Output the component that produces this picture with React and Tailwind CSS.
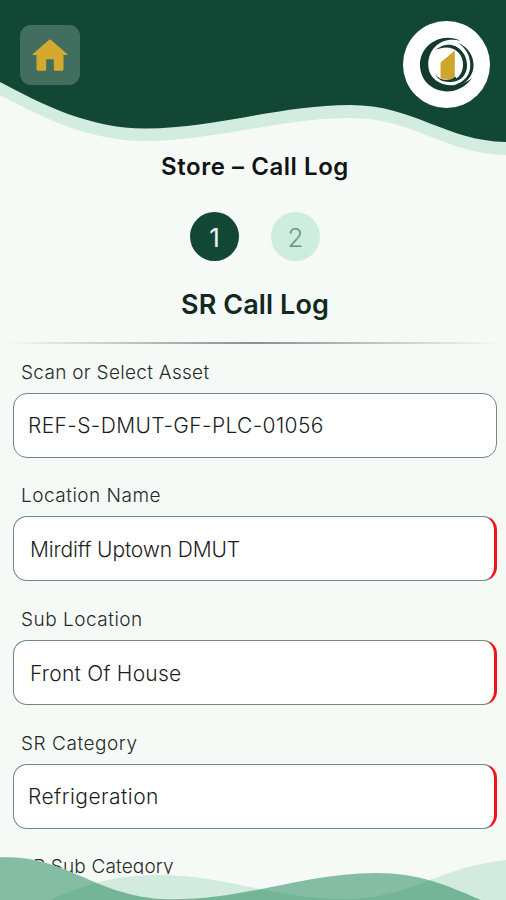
const fields = [
  { label: "Scan or Select Asset", value: "REF-S-DMUT-GF-PLC-01056", labelClass: "tracking-[0.3px]", valueClass: "pl-[14px] tracking-[0.37px]", required: false },
  { label: "Location Name", value: "Mirdiff Uptown DMUT", labelClass: "tracking-[0.5px]", valueClass: "pl-[16px] pr-0 tracking-[-0.15px]", required: true },
  { label: "Sub Location", value: "Front Of House", labelClass: "tracking-[0.5px]", valueClass: "pl-[16px] tracking-[0.22px]", required: true },
  { label: "SR Category", value: "Refrigeration", labelClass: "tracking-[0.55px]", valueClass: "pl-[14px] tracking-[0.45px]", required: true },
  { label: "SR Sub Category", value: "", labelClass: "tracking-[0.15px]", valueClass: "pl-[14px]", required: true },
];

function HomeIcon() {
  return (
    <svg viewBox="0 0 36 32" className="w-9 h-8" fill="#d3aa2d">
      <path d="M17.2.8Q18 .1 18.8.8L35.2 14.9Q36 16 34.8 16H31.5V30.2Q31.5 31.7 30 31.7H23Q21.8 31.7 21.8 30.4V20.3H14.2V30.4Q14.2 31.7 13 31.7H6Q4.5 31.7 4.5 30.2V16H1.2Q0 16 .8 14.9Z" />
    </svg>
  );
}

function Logo() {
  return (
    <svg viewBox="55 62 166 172" className="w-[55px] h-[57px]">
      <g fill="#123b2e">
        <path d="M181 77C124 48 58 88 58 149C58 231 166 261 216 187C169 231 83 212 83 148C83 94 130 61 181 77Z" />
        <path d="M104 105C150 66 199 103 200 149C201 183 174 208 138 199C166 199 188 180 188 148C188 108 148 83 104 105Z" />
        <path d="M172 82C214 98 228 143 215 174C204 202 179 215 151 212C183 207 206 187 209 160C213 126 199 100 172 82Z" />
        <path d="M104 178C118 197 147 199 164 184L168 190C146 207 115 201 104 178Z" />
      </g>
      <path d="M120 142L163 106V185L151 193L120 190Z" fill="#cfa52b" />
    </svg>
  );
}

function HeaderWave() {
  return (
    <svg viewBox="0 0 506 160" className="absolute inset-x-0 top-0 w-full h-40">
      <path d="M0 0H506V155C445 154 415 118 350 118C280 118 215 141 145 141C90 141 43 118 0 95Z" fill="#d2ecdf" />
      <path d="M0 0H506V142C445 141 415 105 350 105C280 105 215 128.5 145 128.5C90 128.5 43 105 0 82Z" fill="#134735" />
    </svg>
  );
}

function FooterWave() {
  return (
    <svg viewBox="0 0 506 50" className="absolute inset-x-0 bottom-0 w-full h-[50px]">
      {/* solid base so the form does not show through the front wave */}
      <path d="M0 7.3C68 4 96 49.3 174 49.3C245 49.3 307 23 375 23C421 23 448 36 481 50H0Z" fill="#f5faf7" />
      <path d="M50 50C88 34 112 25 160 25C225 25 275 49 345 49C410 49 441 16 506 10V50Z" fill="#d3ebdf" />
      <path d="M0 7.3C68 4 96 49.3 174 49.3C245 49.3 307 23 375 23C421 23 448 36 481 50H0Z" fill="#158052" fillOpacity="0.5" />
    </svg>
  );
}

function Field({ field }) {
  return (
    <div className="h-[123.7px] shrink-0">
      <p className={`pl-2 h-8 text-[19px] leading-6 font-light text-[#262b29] whitespace-nowrap ${field.labelClass}`}>
        {field.label}
      </p>
      <div
        className={`h-[65px] pt-0.5 flex items-center rounded-[14px] bg-white border border-[#6f8980] text-[21px] font-light text-[#1d1f1e] whitespace-nowrap ${field.required ? "border-r-[3px] border-r-[#f01414]" : ""} ${field.valueClass}`}
      >
        {field.value}
      </div>
    </div>
  );
}

export default function App() {
  return (
    <div className="relative w-full h-[900px] overflow-hidden flex flex-col bg-[#f5faf7] font-['Inter',sans-serif]">
      <HeaderWave />

      {/* Top bar */}
      <header className="relative h-[150px] shrink-0 flex justify-between items-start pl-5 pr-4">
        <button className="mt-[25px] w-[60px] h-[60px] rounded-[11px] bg-[#416e5e] flex items-center justify-center">
          <HomeIcon />
        </button>
        <div className="mt-[21px] w-[87px] h-[87px] rounded-full bg-white flex items-center justify-center">
          <Logo />
        </div>
      </header>

      {/* Titles and stepper */}
      <div className="relative shrink-0 h-[192px] pl-1 flex flex-col items-center">
        <h1 className="h-8 leading-[33px] text-[24px] font-semibold text-[#111413] tracking-[0.55px] whitespace-nowrap">Store – Call Log</h1>
        <div className="mt-[30px] flex gap-8">
          <span className="w-[49px] h-[49px] pt-px rounded-full bg-[#134735] text-[#f0f5f2] text-[26px] flex items-center justify-center">1</span>
          <span className="w-[49px] h-[49px] pt-px rounded-full bg-[#cdeede] text-[#6f9183] text-[26px] font-light flex items-center justify-center">2</span>
        </div>
        <h2 className="mt-[25px] h-9 leading-[37px] text-[27px] font-semibold text-[#12291f] tracking-[0.1px] whitespace-nowrap">SR Call Log</h2>
      </div>

      <div className="mx-1.5 h-0.5 shrink-0 bg-gradient-to-r from-transparent via-[#87918d] to-transparent" />

      {/* Form */}
      <main className="h-[530px] overflow-hidden flex flex-col pt-[16.6px] pl-[13px] pr-[9px]">
        {fields.map((field) => (
          <Field key={field.label} field={field} />
        ))}
      </main>

      <FooterWave />
    </div>
  );
}
